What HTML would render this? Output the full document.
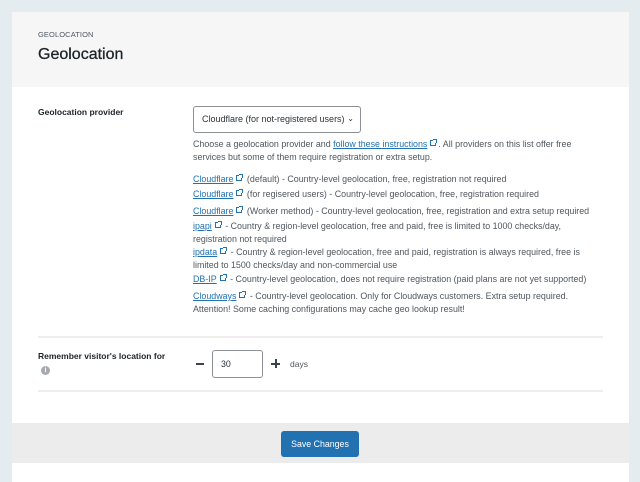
<!DOCTYPE html>
<html><head><meta charset="utf-8"><style>
*{margin:0;padding:0;box-sizing:border-box}
body{width:640px;height:472px;background:#e5ecf0;font-family:"Liberation Sans",sans-serif;color:#3c434a;position:relative;overflow:hidden}
.card{position:absolute;left:12px;top:12px;width:617px;height:470px;background:#fff}
.head{position:absolute;left:0;top:0;width:617px;height:75px;background:#f6f6f6}
.a{position:absolute;white-space:nowrap}
.t{font-size:8.9px;line-height:13px;color:#50575e}
a{color:#2271b1;text-decoration:underline}
.ext{display:inline-block;width:6px;height:6px;border:1px solid #2271b1;margin:0 2px 0 3px;vertical-align:1px;position:relative}
.ext:after{content:"";position:absolute;right:-2px;top:-2px;width:3px;height:3px;background:#fff;border-top:1px solid #2271b1;border-right:1px solid #2271b1}
.hr{position:absolute;left:38px;width:565px;height:2px;background:#eeeeee}
</style></head><body>
<div class="card">
<div class="head"></div>
</div>
<div class="a" style="left:38px;top:30px;font-size:7.5px;color:#50575e;letter-spacing:.1px">GEOLOCATION</div>
<div class="a" style="left:38px;top:46px;font-size:16px;color:#1d2327;-webkit-text-stroke:0.3px #1d2327">Geolocation</div>
<div class="a" style="left:38px;top:107px;font-size:8.5px;font-weight:bold;color:#1d2327">Geolocation provider</div>
<div class="a" style="left:193px;top:106px;width:168px;height:27px;border:1px solid #8c8f94;border-radius:3px;font-size:9px;line-height:25px;padding-left:8px;color:#2c3338">Cloudflare (for not-registered users)<span style="position:absolute;right:6px;top:-1px;font-size:8px">&#8964;</span></div>
<div class="a t" style="left:193px;top:138px">Choose a geolocation provider and <a>follow these instructions<span class="ext"></span></a>. All providers on this list offer free<br>services but some of them require registration or extra setup.</div>
<div class="a t" style="left:193px;top:173px"><a>Cloudflare<span class="ext"></span></a> (default) - Country-level geolocation, free, registration not required</div>
<div class="a t" style="left:193px;top:188px"><a>Cloudflare<span class="ext"></span></a> (for regisered users) - Country-level geolocation, free, registration required</div>
<div class="a t" style="left:193px;top:205px"><a>Cloudflare<span class="ext"></span></a> (Worker method) - Country-level geolocation, free, registration and extra setup required</div>
<div class="a t" style="left:193px;top:220px"><a>ipapi<span class="ext"></span></a> - Country &amp; region-level geolocation, free and paid, free is limited to 1000 checks/day,<br>registration not required</div>
<div class="a t" style="left:193px;top:246px"><a>ipdata<span class="ext"></span></a> - Country &amp; region-level geolocation, free and paid, registration is always required, free is<br>limited to 1500 checks/day and non-commercial use</div>
<div class="a t" style="left:193px;top:273px"><a>DB-IP<span class="ext"></span></a> - Country-level geolocation, does not require registration (paid plans are not yet supported)</div>
<div class="a t" style="left:193px;top:290px"><a>Cloudways<span class="ext"></span></a> - Country-level geolocation. Only for Cloudways customers. Extra setup required.<br>Attention! Some caching configurations may cache geo lookup result!</div>
<div class="hr" style="top:336px"></div>
<div class="a" style="left:38px;top:351px;font-size:8.5px;font-weight:bold;color:#1d2327">Remember visitor's location for</div>
<div class="a" style="left:41px;top:366px;width:9px;height:9px;border-radius:50%;background:#a7aaad;color:#fff;font-size:7px;line-height:9px;text-align:center;font-weight:bold">i</div>
<div class="a" style="left:196px;top:363px;width:8px;height:1.5px;background:#3c434a"></div>
<div class="a" style="left:212px;top:350px;width:51px;height:28px;border:1px solid #8c8f94;border-radius:3px;font-size:8.8px;line-height:26px;padding-left:8px;color:#2c3338">30</div>
<div class="a" style="left:271px;top:363px;width:9px;height:1.5px;background:#3c434a"></div>
<div class="a" style="left:275px;top:359px;width:1.5px;height:9px;background:#3c434a"></div>
<div class="a" style="left:290px;top:359px;font-size:8.5px;color:#50575e">days</div>
<div class="hr" style="top:390px"></div>
<div class="a" style="left:12px;top:423px;width:617px;height:40px;background:#ececec"></div>
<div class="a" style="left:281px;top:431px;width:78px;height:26px;background:#2271b1;border-radius:3px;color:#fff;font-size:8.8px;line-height:26px;text-align:center">Save Changes</div>
</body></html>
